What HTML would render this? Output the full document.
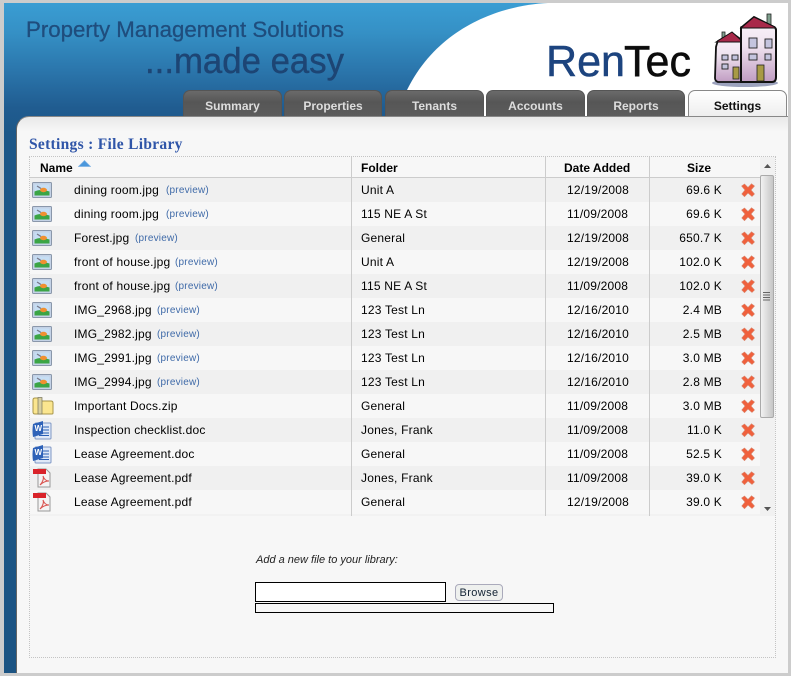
<!DOCTYPE html>
<html><head><meta charset="utf-8"><style>
html,body{margin:0;padding:0;background:#fff}
body{width:792px;height:677px;position:relative;overflow:hidden;font:12px "Liberation Sans",sans-serif;color:#000}
div,span,svg{position:absolute}
.tab{top:90px;width:97px;height:25px;border:1px solid #555;border-bottom:0;border-radius:7px 7px 0 0;box-sizing:content-box;background:linear-gradient(#6a6a6a,#565656 45%,#5c5c5c);color:#ddd;font-weight:bold;text-align:center;line-height:30px}
.r{left:30px;width:730px;height:24px}
.t{top:5px;line-height:14px;white-space:nowrap;letter-spacing:.2px}
.t.p{top:6px;font-size:10px;color:#3f6aa8;letter-spacing:.2px}
.h{top:161px;font-weight:bold;line-height:14px}
.l{top:157px;height:359px;width:1px;background:#ccc;z-index:3}
</style></head><body>
<svg width="0" height="0" style="left:0;top:0"><defs>
<symbol id="img" viewBox="0 0 20 16"><rect x=".5" y=".5" width="19" height="15" rx="1" fill="#c4d2e6" stroke="#8a97aa"/><rect x="2.500" y="2.500" width="15" height="11" fill="#c6def4"/><path d="M2.500 13.500V9.500c4-2 9-2 15 0v4z" fill="#3ba545"/><ellipse cx="11.500" cy="8" rx="3.500" ry="2.200" fill="#f09030"/><path d="M5 4l4 2.500" stroke="#778" stroke-width="1.300"/></symbol>
<symbol id="zip" viewBox="0 0 22 18"><path d="M1 3q0-2 2-2h4l2 3h10q2 0 2 2v10q0 1-1 1H3q-2 0-2-2z" fill="#fbe68f" stroke="#a8964a"/><rect x="6" y="0.500" width="4" height="16.500" fill="#d8d0a0" stroke="#77735a" stroke-width=".7"/></symbol>
<symbol id="doc" viewBox="0 0 20 20"><rect x="3" y="3" width="16" height="16" rx="1" fill="#dfe8f7" stroke="#7f97c4"/><path d="M11 7h6M11 10h6M7 13h10M7 15.500h10" stroke="#2a5fb5"/><path d="M1 4l10-3v13L1 17q-1-6 0-13z" fill="#2e62b8"/><text x="2.500" y="11" font-size="8" font-weight="bold" fill="#fff" font-family="Liberation Sans">W</text></symbol>
<symbol id="pdf" viewBox="0 0 18 20"><path d="M5 1h8l4 4v14H5z" fill="#f4f4f4" stroke="#999"/><rect x="0" y="1" width="13" height="5" fill="#d9232a"/><path d="M7 17c3-3 4-7 3-9 1 3 3 5 6 5-3 0-6 1-9 4z" fill="none" stroke="#d9534f" stroke-width="1.100"/></symbol>
<symbol id="x" viewBox="0 0 14 14"><path d="M3.500 1L7 4.500 10.500 .8 13.500 3 10 7l3.500 4-2.500 2.500L7 10l-3.500 3.700L.8 11 4 7 .6 3z" fill="#f0603c" stroke="#d9866e" stroke-width=".6"/></symbol>
</defs></svg>

<div style="left:0;top:0;width:791px;height:676px;background:#ccc"></div>
<div style="left:4px;top:3px;width:784px;height:670px;background:#fff"></div>
<div style="left:4px;top:3px;width:784px;height:670px;background:linear-gradient(#3a9dd3 0,#3590c5 30px,#2a74aa 70px,#205c90 105px,#1d5788 130px,#1c5483 100%)"></div>
<svg style="left:4px;top:3px" width="784" height="113"><path d="M544 0C500 2 435 22 403 87H784V0z" fill="#fff"/><rect x="470" y="87" width="314" height="26" fill="#fff"/></svg>

<svg style="left:0;top:0" width="792" height="116">
<text x="26" y="37" font-family="Liberation Sans" font-size="22" fill="#1f4d7d" stroke="#1f4d7d" stroke-width=".3" textLength="318" lengthAdjust="spacingAndGlyphs">Property Management Solutions</text>
<text x="145" y="73" font-family="Liberation Sans" font-size="36" fill="#1d4574" stroke="#1d4574" stroke-width=".4" textLength="199" lengthAdjust="spacingAndGlyphs">...made easy</text>
<defs><linearGradient id="bg" x1="0" y1="0" x2="0" y2="1"><stop offset="0" stop-color="#fbf6fb"/><stop offset=".45" stop-color="#efe3ef"/><stop offset="1" stop-color="#c09cc2"/></linearGradient></defs>
<text x="546" y="76" font-family="Liberation Sans" font-size="44" fill="#1d447f" stroke="#1d447f" stroke-width=".5" textLength="79" lengthAdjust="spacingAndGlyphs">Ren</text>
<text x="624" y="76" font-family="Liberation Sans" font-size="44" fill="#0c0c0c" stroke="#0c0c0c" stroke-width=".5" textLength="67" lengthAdjust="spacingAndGlyphs">Tec</text>
<ellipse cx="745" cy="83" rx="33" ry="4" fill="#9ca2bd"/>
<rect x="722" y="32" width="3" height="8" fill="#7fa08e" stroke="#222" stroke-width=".8"/>
<rect x="767" y="14" width="4" height="11" fill="#7fa08e" stroke="#222" stroke-width=".8"/>
<path d="M716 47q1-4 2-6l14-8 11 8v41h-25q-3-1-3-4z" fill="url(#bg)" stroke="#111" stroke-width="1.800"/>
<path d="M716 42l16-10 10 9v1H717z" fill="#a8294a" stroke="#111"/>
<path d="M741 28q0-1 1-1l12-10 20 10q2 1 2 3v47q0 5-4 5h-31z" fill="url(#bg)" stroke="#111" stroke-width="2"/>
<path d="M741 28l13-11 21 10v1z" fill="#a8294a" stroke="#111"/>
<g fill="#c4c4de" stroke="#222" stroke-width=".9">
<rect x="749" y="38" width="8" height="10"/><rect x="765" y="39" width="7" height="9"/>
<rect x="749" y="54" width="8" height="6"/><rect x="765" y="54" width="6" height="6"/>
<rect x="722" y="55" width="6" height="5"/><rect x="732" y="55" width="6" height="5"/><rect x="722" y="64" width="6" height="5"/></g>
<rect x="733" y="67" width="6" height="12" fill="#a89a45" stroke="#222" stroke-width=".8"/>
<rect x="757" y="65" width="7" height="16" fill="#a89a45" stroke="#222" stroke-width=".8"/>
</svg>

<div class="tab" style="left:183px">Summary</div>
<div class="tab" style="left:284px;width:96px">Properties</div>
<div class="tab" style="left:385px">Tenants</div>
<div class="tab" style="left:486px">Accounts</div>
<div class="tab" style="left:587px;width:96px">Reports</div>
<div class="tab" style="left:688px;background:linear-gradient(#fff,#eee);color:#111;border-color:#888">Settings</div>

<div style="left:16px;top:116px;width:772px;height:557px;background:linear-gradient(#e9e9e9,#f7f7f7 15px);border-top:1px solid #888;border-left:1px solid #666;border-top-left-radius:13px;box-sizing:border-box"></div>

<div style="left:29px;top:136px;font:bold 15.500px/18px 'Liberation Serif',serif;color:#2f55a8;letter-spacing:.3px">Settings : File Library</div>

<div style="left:29px;top:156px;width:747px;height:502px;border:1px dotted #c4c4c4;box-sizing:border-box"></div>
<div style="left:30px;top:177px;width:730px;height:1px;background:#ccc"></div>
<div class="l" style="left:351px"></div><div class="l" style="left:545px"></div><div class="l" style="left:649px"></div>
<div style="left:30px;top:514px;width:730px;height:2px;background:#f2f2f2"></div>

<div class="h" style="left:40px">Name</div>
<svg style="left:78px;top:160px" width="13" height="7"><path d="M6.500 .5L12.500 6.500H.5z" fill="#4a97dc" stroke="#7fb2e4" stroke-width=".7"/></svg>
<div class="h" style="left:361px">Folder</div>
<div class="h" style="left:564px">Date Added</div>
<div class="h" style="left:687px">Size</div>

<div class="r" style="top:178px;background:#f0f0f0"><svg style="left:2px;top:4px" width="20" height="16"><use href="#img"/></svg><span class="t" style="left:44px">dining room.jpg</span><span class="t p" style="left:136px">(preview)</span><span class="t" style="left:331px">Unit A</span><span class="t" style="left:537px">12/19/2008</span><span class="t" style="right:38px">69.6 K</span><svg style="left:711px;top:5px" width="14" height="14"><use href="#x"/></svg></div>
<div class="r" style="top:202px"><svg style="left:2px;top:4px" width="20" height="16"><use href="#img"/></svg><span class="t" style="left:44px">dining room.jpg</span><span class="t p" style="left:136px">(preview)</span><span class="t" style="left:331px">115 NE A St</span><span class="t" style="left:537px">11/09/2008</span><span class="t" style="right:38px">69.6 K</span><svg style="left:711px;top:5px" width="14" height="14"><use href="#x"/></svg></div>
<div class="r" style="top:226px;background:#f0f0f0"><svg style="left:2px;top:4px" width="20" height="16"><use href="#img"/></svg><span class="t" style="left:44px">Forest.jpg</span><span class="t p" style="left:105px">(preview)</span><span class="t" style="left:331px">General</span><span class="t" style="left:537px">12/19/2008</span><span class="t" style="right:38px">650.7 K</span><svg style="left:711px;top:5px" width="14" height="14"><use href="#x"/></svg></div>
<div class="r" style="top:250px"><svg style="left:2px;top:4px" width="20" height="16"><use href="#img"/></svg><span class="t" style="left:44px">front of house.jpg</span><span class="t p" style="left:145px">(preview)</span><span class="t" style="left:331px">Unit A</span><span class="t" style="left:537px">12/19/2008</span><span class="t" style="right:38px">102.0 K</span><svg style="left:711px;top:5px" width="14" height="14"><use href="#x"/></svg></div>
<div class="r" style="top:274px;background:#f0f0f0"><svg style="left:2px;top:4px" width="20" height="16"><use href="#img"/></svg><span class="t" style="left:44px">front of house.jpg</span><span class="t p" style="left:145px">(preview)</span><span class="t" style="left:331px">115 NE A St</span><span class="t" style="left:537px">11/09/2008</span><span class="t" style="right:38px">102.0 K</span><svg style="left:711px;top:5px" width="14" height="14"><use href="#x"/></svg></div>
<div class="r" style="top:298px"><svg style="left:2px;top:4px" width="20" height="16"><use href="#img"/></svg><span class="t" style="left:44px">IMG_2968.jpg</span><span class="t p" style="left:127px">(preview)</span><span class="t" style="left:331px">123 Test Ln</span><span class="t" style="left:537px">12/16/2010</span><span class="t" style="right:38px">2.4 MB</span><svg style="left:711px;top:5px" width="14" height="14"><use href="#x"/></svg></div>
<div class="r" style="top:322px;background:#f0f0f0"><svg style="left:2px;top:4px" width="20" height="16"><use href="#img"/></svg><span class="t" style="left:44px">IMG_2982.jpg</span><span class="t p" style="left:127px">(preview)</span><span class="t" style="left:331px">123 Test Ln</span><span class="t" style="left:537px">12/16/2010</span><span class="t" style="right:38px">2.5 MB</span><svg style="left:711px;top:5px" width="14" height="14"><use href="#x"/></svg></div>
<div class="r" style="top:346px"><svg style="left:2px;top:4px" width="20" height="16"><use href="#img"/></svg><span class="t" style="left:44px">IMG_2991.jpg</span><span class="t p" style="left:127px">(preview)</span><span class="t" style="left:331px">123 Test Ln</span><span class="t" style="left:537px">12/16/2010</span><span class="t" style="right:38px">3.0 MB</span><svg style="left:711px;top:5px" width="14" height="14"><use href="#x"/></svg></div>
<div class="r" style="top:370px;background:#f0f0f0"><svg style="left:2px;top:4px" width="20" height="16"><use href="#img"/></svg><span class="t" style="left:44px">IMG_2994.jpg</span><span class="t p" style="left:127px">(preview)</span><span class="t" style="left:331px">123 Test Ln</span><span class="t" style="left:537px">12/16/2010</span><span class="t" style="right:38px">2.8 MB</span><svg style="left:711px;top:5px" width="14" height="14"><use href="#x"/></svg></div>
<div class="r" style="top:394px"><svg style="left:2px;top:3px" width="22" height="18"><use href="#zip"/></svg><span class="t" style="left:44px">Important Docs.zip</span><span class="t" style="left:331px">General</span><span class="t" style="left:537px">11/09/2008</span><span class="t" style="right:38px">3.0 MB</span><svg style="left:711px;top:5px" width="14" height="14"><use href="#x"/></svg></div>
<div class="r" style="top:418px;background:#f0f0f0"><svg style="left:2px;top:2px" width="20" height="20"><use href="#doc"/></svg><span class="t" style="left:44px">Inspection checklist.doc</span><span class="t" style="left:331px">Jones, Frank</span><span class="t" style="left:537px">11/09/2008</span><span class="t" style="right:38px">11.0 K</span><svg style="left:711px;top:5px" width="14" height="14"><use href="#x"/></svg></div>
<div class="r" style="top:442px"><svg style="left:2px;top:2px" width="20" height="20"><use href="#doc"/></svg><span class="t" style="left:44px">Lease Agreement.doc</span><span class="t" style="left:331px">General</span><span class="t" style="left:537px">11/09/2008</span><span class="t" style="right:38px">52.5 K</span><svg style="left:711px;top:5px" width="14" height="14"><use href="#x"/></svg></div>
<div class="r" style="top:466px;background:#f0f0f0"><svg style="left:3px;top:2px" width="18" height="20"><use href="#pdf"/></svg><span class="t" style="left:44px">Lease Agreement.pdf</span><span class="t" style="left:331px">Jones, Frank</span><span class="t" style="left:537px">11/09/2008</span><span class="t" style="right:38px">39.0 K</span><svg style="left:711px;top:5px" width="14" height="14"><use href="#x"/></svg></div>
<div class="r" style="top:490px"><svg style="left:3px;top:2px" width="18" height="20"><use href="#pdf"/></svg><span class="t" style="left:44px">Lease Agreement.pdf</span><span class="t" style="left:331px">General</span><span class="t" style="left:537px">12/19/2008</span><span class="t" style="right:38px">39.0 K</span><svg style="left:711px;top:5px" width="14" height="14"><use href="#x"/></svg></div>

<div style="left:760px;top:157px;width:15px;height:359px;background:#f1f1f1"></div>
<svg style="left:760px;top:157px" width="15" height="359"><path d="M4 11l3.500-4 3.500 4z" fill="#555"/><path d="M4 350l3.500 4 3.500-4z" fill="#555"/></svg>
<div style="left:760px;top:175px;width:14px;height:243px;box-sizing:border-box;border:1px solid #aaa;border-radius:2px;background:linear-gradient(90deg,#f2f2f2,#dedede 45%,#c6c6c6)"></div>
<svg style="left:762px;top:291px" width="10" height="10"><path d="M1 1.500h7M1 4h7M1 6.500h7M1 9h7" stroke="#666"/></svg>

<div style="left:256px;top:553px;font-style:italic;font-size:11px;line-height:14px;color:#222">Add a new file to your library:</div>
<div style="left:255px;top:582px;width:191px;height:20px;box-sizing:border-box;border:1px solid #000;background:#fff"></div>
<div style="left:455px;top:584px;width:48px;height:17px;box-sizing:border-box;border:1px solid #aab;border-radius:4px;background:#eef0ee;text-align:center;font-size:11px;line-height:16px;letter-spacing:.4px;color:#123">Browse</div>
<div style="left:255px;top:603px;width:299px;height:10px;box-sizing:border-box;border:1px solid #000;background:#f7f7f7"></div>
</body></html>
